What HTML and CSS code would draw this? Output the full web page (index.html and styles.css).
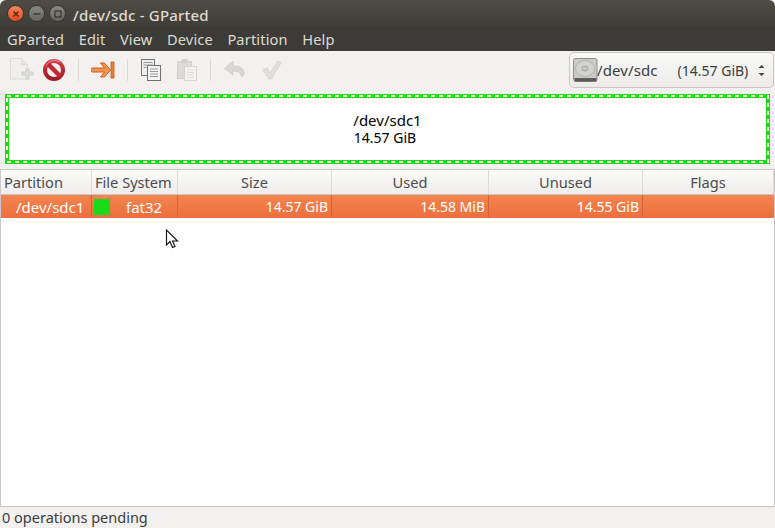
FILE: index.html
```html
<!DOCTYPE html>
<html lang="en">
<head>
<meta charset="utf-8">
<title>/dev/sdc - GParted</title>
<link rel="stylesheet" href="styles.css">
</head>
<body>
<div class="window">
  <header class="titlebar">
    <div class="controls">
      <span class="wbtn close"><svg width="8" height="8" viewBox="0 0 8 8"><path d="M1.500 1.500l5 5M6.500 1.500l-5 5" stroke="#5a1f0a" stroke-width="1.300"/></svg></span>
      <span class="wbtn"><svg width="8" height="8" viewBox="0 0 8 8"><path d="M.5 4h7" stroke="#333" stroke-width="1.300"/></svg></span>
      <span class="wbtn"><svg width="8" height="8" viewBox="0 0 8 8"><rect x="1" y="1" width="6" height="6" fill="none" stroke="#333" stroke-width="1.200"/></svg></span>
    </div>
    <span class="wintitle">/dev/sdc - GParted</span>
  </header>
  <nav class="menubar">
    <span>GParted</span><span>Edit</span><span>View</span><span>Device</span><span>Partition</span><span>Help</span>
  </nav>
  <div class="toolbar">
    <svg class="icon first" width="28" height="26" viewBox="0 0 28 26">
      <path d="M2.500 1.500h11l6 6v14.500h-17z" fill="#f0efed" stroke="#dcdbd8"/>
      <path d="M13.500 1.500v6h6" fill="#e8e7e4" stroke="#dcdbd8"/>
      <path d="M17 16h4v-3h3v3h4v3h-4v4h-3v-4h-4z" transform="translate(-3 -1)" fill="#dededb" stroke="#c8c8c5" stroke-width=".8"/>
    </svg>
    <svg class="icon" width="24" height="24" viewBox="0 0 24 24">
      <defs><linearGradient id="stopred" x1="0" y1="0" x2="0" y2="1"><stop offset="0" stop-color="#d9414c"/><stop offset="1" stop-color="#97141f"/></linearGradient></defs>
      <circle cx="12" cy="12" r="11" fill="url(#stopred)"/>
      <circle cx="12" cy="12" r="7" fill="#f7ecea"/>
      <path d="M5.500 5.500l13 13" stroke="#bd2632" stroke-width="4.500"/>
      <path d="M4 8a9.500 9.500 0 0 1 14-4" fill="none" stroke="#ee8a90" stroke-width="1"/>
    </svg>
    <i class="sep"></i>
    <svg class="icon" width="24" height="22" viewBox="0 0 24 22">
      <path d="M1.500 9h12l-4-5h4l6 7-6 7h-4l4-5h-12a2 2 0 0 1 0-4z" fill="#ef9550" stroke="#cf5f1c"/>
      <rect x="20" y="3" width="3" height="16" fill="#e8813a" stroke="#c9581a" stroke-width=".8"/>
    </svg>
    <i class="sep"></i>
    <svg class="icon" width="22" height="24" viewBox="0 0 22 24">
      <rect x="1.500" y="1.500" width="13" height="16" fill="#eee" stroke="#777"/>
      <rect x="7.500" y="7.500" width="13" height="15" fill="#f4f4f4" stroke="#6f6f6f"/>
      <path d="M3.500 4.500h9M3.500 7h9M3.500 9.500h3M10 11h8M10 13.500h8M10 16h8M10 18.500h8" stroke="#999"/>
    </svg>
    <svg class="icon gap" width="22" height="24" viewBox="0 0 22 24">
      <rect x="1.500" y="3.500" width="14" height="17" fill="#dcdbd9" stroke="#d2d1ce"/>
      <rect x="5.500" y="1" width="6" height="4" fill="#d0cfcc"/>
      <rect x="8.500" y="8.500" width="12" height="14" fill="#f4f3f1" stroke="#d6d5d2"/>
      <path d="M11 12h7M11 14.500h7M11 17h7M11 19.500h7" stroke="#dddcda"/>
    </svg>
    <i class="sep"></i>
    <svg class="icon" width="24" height="22" viewBox="0 0 24 22">
      <path d="M10 2L1.500 9.500 10 16v-4c5 0 7 1.500 9 6 2-2 2.500-4 1.500-6.500C19 8 15 7 10 7z" fill="#d8d7d4" stroke="#d0cfcc"/>
    </svg>
    <svg class="icon gap" width="22" height="22" viewBox="0 0 22 22">
      <path d="M2 11l4-2 3 5 8-12 3 2-10 16h-2z" fill="#e0dfdc" stroke="#d6d5d2"/>
    </svg>
    <div class="combo">
      <svg width="27" height="27" viewBox="0 0 27 27">
        <path d="M4 1.500h19a2 2 0 0 1 2 2v19l-1 2h-21l-1.500-2v-19a2 2 0 0 1 2.500-2z" fill="#cbcbc8" stroke="#8d8d8a"/>
        <ellipse cx="13" cy="11.500" rx="9.500" ry="8" fill="#d2d2cf" stroke="#b0b0ad"/>
        <ellipse cx="13" cy="11.500" rx="3" ry="2.500" fill="#c4c4c1" stroke="#a4a4a1"/>
        <rect x="2.500" y="21" width="22" height="3.500" fill="#5c5c5a"/>
      </svg>
      <span class="combo-dev">/dev/sdc</span>
      <span class="combo-size">(14.57 GiB)</span>
      <svg class="updown" width="7" height="13" viewBox="0 0 7 13"><path d="M3.500 1l3 3h-6zM3.500 12l3-3h-6z" fill="#444"/></svg>
    </div>
  </div>
  <section class="map">
    <svg class="dashes" width="765" height="70" viewBox="0 0 765 70"><rect x="2" y="2" width="761" height="66" fill="none" stroke="#f6ffd8" stroke-width="2" stroke-dasharray="4 4"/></svg>
    <span class="map-name">/dev/sdc1</span>
    <span class="map-size">14.57 GiB</span>
  </section>
  <main class="table">
    <div class="row head">
      <div class="c c1">Partition</div><div class="c c2">File System</div><div class="c c3">Size</div><div class="c c4">Used</div><div class="c c5">Unused</div><div class="c c6">Flags</div>
    </div>
    <div class="row sel">
      <div class="c c1 dev">/dev/sdc1</div>
      <div class="c c2 fs"><i class="swatch"></i><span>fat32</span></div>
      <div class="c c3">14.57 GiB</div><div class="c c4">14.58 MiB</div><div class="c c5">14.55 GiB</div><div class="c c6"></div>
    </div>
    <svg class="cursor" width="14" height="20" viewBox="0 0 14 20"><path d="M1.500 1v15l3.500-3.500 2.500 6 2.500-1-2.500-5.500h5z" fill="#fff" stroke="#111" stroke-width="1.100"/></svg>
  </main>
  <footer class="status">0 operations pending</footer>
</div>
</body>
</html>
```
FILE: styles.css
```css
html, body { margin: 0; padding: 0; }
body { width: 775px; height: 528px; overflow: hidden; }
.window {
  width: 775px; height: 528px; display: flex; flex-direction: column;
  background: #f2f1ef; color: #3c3c3c;
  font: 14px "Noto Sans", "Open Sans", sans-serif;
}
.titlebar {
  height: 27px; flex: none; display: flex; align-items: center; padding-left: 7px;
  background: linear-gradient(#4f4c45, #3f3d38); color: #dfdbd2;
  border-radius: 6px 6px 0 0;
}
.controls { display: flex; gap: 4px; width: 66px; flex: none; }
.wbtn {
  width: 15px; height: 15px; border-radius: 50%; flex: none;
  display: flex; align-items: center; justify-content: center;
  background: linear-gradient(#8a8880, #66645e); border: 1px solid #35332f;
}
.wbtn.close { background: linear-gradient(#f5865c, #dd4b1c); }
.wintitle { font-weight: 500; font-size: 15px; letter-spacing: .2px; padding-top: 2px; }
.menubar {
  height: 24px; flex: none; display: flex; gap: 14.500px; align-items: center; padding-left: 7px;
  background: #3c3b37; color: #dfdbd2; font-size: 14.600px; letter-spacing: .15px;
}
.toolbar { height: 43px; flex: none; display: flex; align-items: center; box-sizing: border-box; padding: 0 1px 5px 8px; }
.icon { flex: none; }
.icon.first { margin-right: 6px; }
.icon.gap { margin-left: 14px; }
.sep { width: 1px; height: 22px; background: #dad9d6; flex: none; margin: 0 12px; }
.combo {
  margin-left: auto; width: 205px; height: 36px; box-sizing: border-box; display: flex; align-items: center;
  padding: 0 8px 0 2px; border: 1px solid #c9c8c4; border-radius: 5px;
  background: linear-gradient(#fafaf9, #ecebe9); color: #3c3c3c;
}
.combo-dev { font-size: 15px; letter-spacing: .1px; margin-left: -2px; }
.combo-size { margin-left: 20px; }
.updown { margin-left: auto; }
.map {
  position: relative; flex: none; height: 70px; margin: 0 5px; box-sizing: border-box;
  border: 4px solid #18dc18; background: #fff; color: #000;
  display: flex; flex-direction: column; align-items: center; justify-content: center;
  line-height: 18px;
}
.map-name { font-size: 15px; }
.map-size { padding-right: 5px; }
.dashes { position: absolute; left: -4px; top: -4px; }
.table {
  position: relative; flex: 1; margin-top: 5px; display: flex; flex-direction: column;
  background: #fff; border: 1px solid #c9c8c4; min-height: 0;
}
.row { display: flex; flex: none; }
.c { box-sizing: border-box; flex: none; white-space: nowrap; padding: 0 4px; }
.c1 { width: 91px; } .c2 { width: 86px; } .c3 { width: 154px; }
.c4 { width: 157px; } .c5 { width: 154px; } .c6 { width: 131px; }
.head { height: 25px; line-height: 25px; background: linear-gradient(#fbfbfa, #eeedeb); color: #4c4c4c; border-bottom: 1px solid #c9c8c4; box-sizing: border-box; font-size: 14.600px; }
.head .c { border-right: 1px solid #dcdbd8; text-align: center; }
.head .c1, .head .c2 { text-align: left; padding-left: 3px; }
.sel { height: 23px; line-height: 24px; background: linear-gradient(#f58450, #ec6f3c); color: #fff; }
.sel .c { border-right: 1px solid #cf6538; text-align: right; padding-right: 3px; }
.sel .dev { text-align: left; padding-left: 15px; font-size: 15px; }
.fs { display: flex; align-items: center; padding-left: 2px; }
.swatch { width: 16px; height: 16px; background: #18dc18; flex: none; }
.fs span { margin-left: 16px; font-size: 15px; }
.sel .c6 { border-right: none; }
.cursor { position: absolute; left: 164px; top: 59px; }
.status { height: 21px; flex: none; line-height: 21px; padding-left: 2px; color: #3c3c3c; font-size: 14.500px; }
```
